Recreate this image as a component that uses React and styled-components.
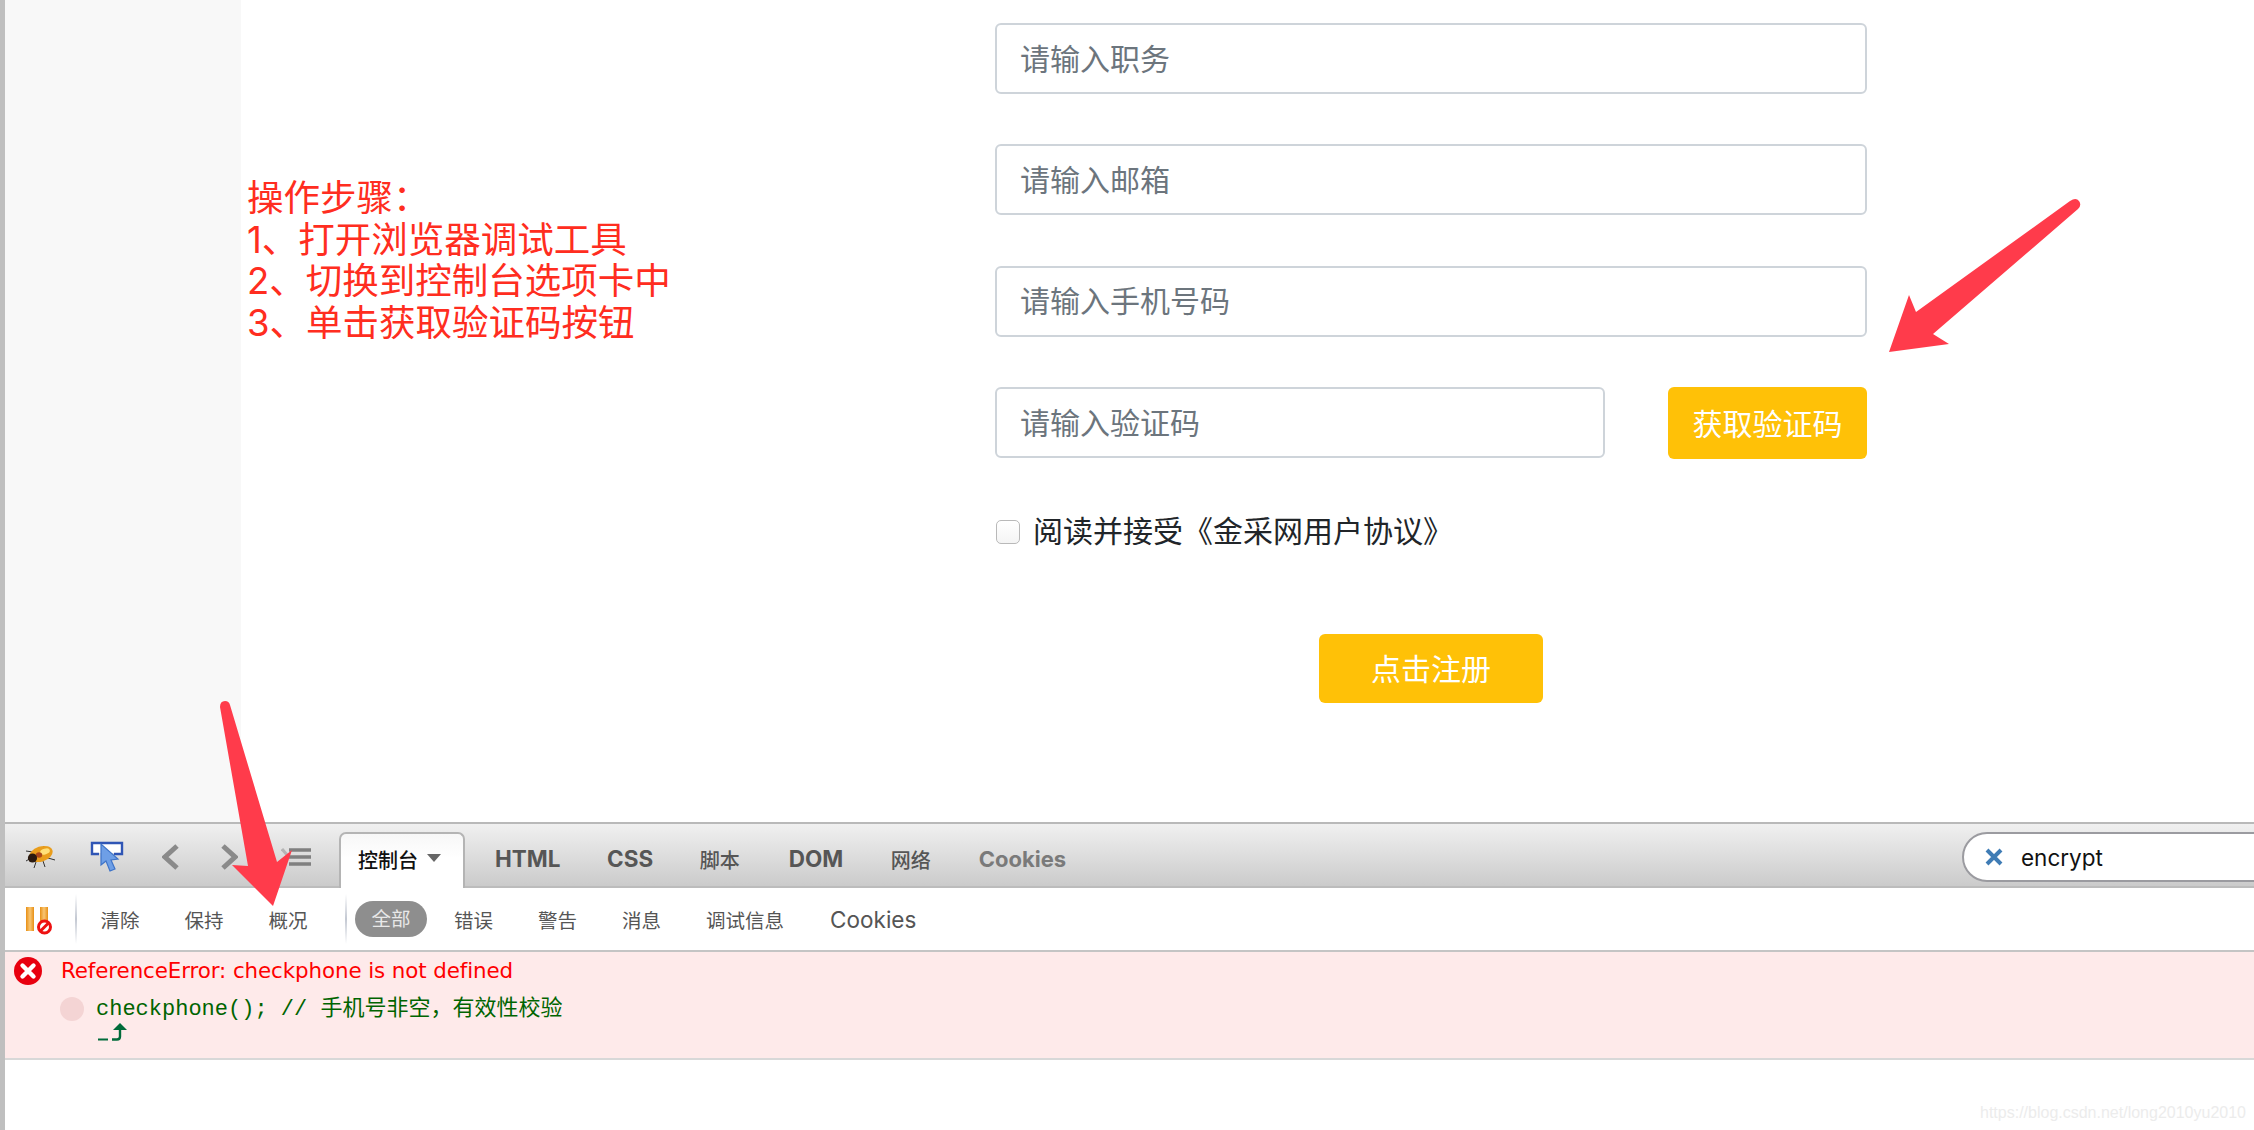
import React from 'react';
import styled, { createGlobalStyle } from 'styled-components';

const CJK = '"Noto Sans CJK SC", sans-serif';
const UI = 'Inter, "Noto Sans CJK SC", sans-serif';

const Global = createGlobalStyle`
  html, body { margin: 0; padding: 0; background: #fff; }
  * { box-sizing: border-box; }
`;

const Page = styled.div`
  position: relative;
  width: 2254px;
  height: 1130px;
  overflow: hidden;
  display: flex;
  background: #fff;
  font-family: ${UI};
`;
const Edge = styled.div`
  width: 5px;
  flex: none;
  background: #bfbfbf;
`;
const Content = styled.div`
  flex: 1;
  min-width: 0;
  display: flex;
  flex-direction: column;
`;
const Top = styled.div`
  height: 822px;
  flex: none;
  display: flex;
`;
const Sidebar = styled.div`
  width: 236px;
  flex: none;
  background: #f8f8f8;
`;
const Form = styled.form`
  width: 872px;
  margin-left: 754px;
  padding-top: 23px;
  display: flex;
  flex-direction: column;
`;
const Row = styled.div`
  display: flex;
  justify-content: space-between;
  margin-bottom: 50.4px;
`;
const Field = styled.input`
  width: ${p => p.$w || '100%'};
  height: 71px;
  border: 2px solid #ced4da;
  border-radius: 6px;
  padding: 0 23px 4px;
  font: 30px ${CJK};
  color: #495057;
  background: #fff;
  outline: none;
  &::placeholder { color: #6c757d; opacity: 1; }
`;
const CodeButton = styled.button`
  width: 199px;
  height: 72px;
  border: 0;
  border-radius: 6px;
  background: #ffc107;
  color: #fff;
  font: 30px ${CJK};
  padding: 0 0 3px;
`;
const Agree = styled.label`
  display: flex;
  align-items: center;
  height: 44px;
  margin-top: 1px;
  padding-left: 1px;
  font: 30px ${CJK};
  color: #212529;
`;
const Box = styled.span`
  width: 24px;
  height: 24px;
  margin-right: 13px;
  margin-top: -2px;
  border: 1.5px solid #b9b9b9;
  border-radius: 5px;
  background: linear-gradient(#fff, #f4f4f4);
`;
const AgreeText = styled.span`
  margin-bottom: 7px;
`;
const Register = styled.button`
  align-self: center;
  width: 224px;
  height: 69px;
  margin-top: 79px;
  border: 0;
  border-radius: 6px;
  background: #ffc107;
  color: #fff;
  font: 30px ${CJK};
  padding: 0 0 3px;
`;

const Toolbar = styled.div`
  height: 66px;
  flex: none;
  position: relative;
  display: flex;
  align-items: flex-end;
  border-top: 2px solid #b9b9b9;
  border-bottom: 2px solid #bcbcbc;
  background: linear-gradient(#f0f0f0, #cbcbcb);
`;
const IconSlot = styled.span`
  display: flex;
  flex: none;
  align-self: center;
  margin-top: 4px;
  margin-left: ${p => p.$ml}px;
`;
const ActiveTab = styled.div`
  width: 126px;
  height: 56px;
  margin-left: ${p => p.$ml}px;
  margin-bottom: -2px;
  padding: 0 0 4px 17px;
  display: flex;
  align-items: center;
  gap: 9px;
  border: 2px solid #b4b4b4;
  border-bottom: 0;
  border-radius: 7px 7px 0 0;
  background: linear-gradient(#f7f7f7, #fff 45%);
  font: 500 20px ${CJK};
  color: #111;
`;
const Caret = styled.span`
  width: 0;
  height: 0;
  margin-bottom: 3px;
  border-left: 7px solid transparent;
  border-right: 7px solid transparent;
  border-top: 8px solid #666;
`;
const Tab = styled.div`
  height: 54px;
  line-height: 54px;
  padding-top: ${p => p.$cjk ? 2 : 0}px;
  flex: none;
  margin-left: ${p => p.$ml}px;
  font-family: ${UI};
  font-size: ${p => p.$cjk ? 20 : p.$dim ? 22 : 22.5}px;
  font-weight: ${p => p.$cjk ? 500 : 700};
  color: ${p => p.$dim ? '#7a7a7a' : '#565656'};
`;
const Search = styled.div`
  position: absolute;
  left: 1957px;
  top: 8px;
  width: 320px;
  height: 50px;
  display: flex;
  align-items: center;
  padding-left: 21px;
  gap: 18px;
  border: 2px solid #9b9ba0;
  border-radius: 25px;
  background: #fff;
  font: 22.5px ${UI};
  color: #111;
`;

const Filter = styled.div`
  height: 62px;
  flex: none;
  display: flex;
  align-items: center;
`;
const Sep = styled.span`
  width: 2px;
  height: 50px;
  flex: none;
  margin-left: ${p => p.$ml}px;
  background: linear-gradient(#fff, #c3c8d2 50%, #fff);
`;
const FilterItem = styled.span`
  flex: none;
  margin-left: ${p => p.$ml}px;
  font: ${p => p.$latin ? 22.5 : 19.5}px ${UI};
  color: #555;
`;
const Pill = styled.span`
  width: 72px;
  height: 36px;
  flex: none;
  margin-left: ${p => p.$ml}px;
  border-radius: 18px;
  background: #8e8e8e;
  color: #e8e8e8;
  font: 19.5px/36px ${UI};
  text-align: center;
`;

const ErrorBlock = styled.div`
  height: 110px;
  flex: none;
  display: flex;
  padding: 5px 0 0 9px;
  border-top: 2px solid #c4c4c4;
  border-bottom: 2px solid #d8d8d8;
  background: #feeaea;
`;
const ErrorBody = styled.div`
  margin-left: 19px;
  display: flex;
  flex-direction: column;
`;
const ErrorTitle = styled.div`
  font: 21.4px/28px "DejaVu Sans", ${CJK};
  letter-spacing: -0.1px;
  color: #f00;
  height: 28px;
`;
const CodeLine = styled.div`
  display: flex;
  align-items: center;
  margin-top: 11px;
  gap: 12px;
  margin-left: -1px;
`;
const Breakpoint = styled.span`
  width: 24px;
  height: 24px;
  margin-top: -2px;
  border-radius: 50%;
  background: #f4d4d4;
`;
const Code = styled.code`
  font: 22px/28px "Liberation Mono", ${CJK};
  color: #006400;
  white-space: pre;
`;
const Pointer = styled.span`
  display: flex;
  margin: -2px 0 0 36px;
`;

const Annotation = styled.div`
  position: absolute;
  left: 247px;
  top: 178px;
  font: 36.5px/41.7px Inter, ${CJK};
  color: #ff2d20;
  white-space: pre;
`;
const Watermark = styled.div`
  position: absolute;
  left: 1980px;
  top: 1100px;
  font: 16px/26px "Liberation Sans", sans-serif;
  color: #ececec;
  white-space: nowrap;
`;
const Arrows = styled.svg`
  position: absolute;
  left: 0;
  top: 0;
  pointer-events: none;
`;

const Bug = () => (
  <svg width="32" height="24" viewBox="0 0 32 24">
    <g stroke="#333" strokeWidth="1" fill="none">
      <path d="M9 7 2 6M12 17l-2 6M19 16l2 6M24 13l7 2M7 13l-5 3M18 4l2-3" />
    </g>
    <ellipse cx="17" cy="9" rx="12" ry="7.5" transform="rotate(-18 17 9)" fill="#e99d1c" />
    <ellipse cx="21" cy="6.500" rx="5" ry="2.800" transform="rotate(-18 21 6.500)" fill="#ffe07a" />
    <ellipse cx="15" cy="10" rx="3.200" ry="2.800" fill="#a9461a" />
    <circle cx="8.500" cy="13" r="4.600" fill="#2b1a10" />
  </svg>
);
const Inspect = () => (
  <svg width="34" height="32" viewBox="0 0 34 32">
    <path d="M1 12V2h31v10h-9" fill="#fff" />
    <path d="M9 13H2V2h30v11h-8" fill="none" stroke="#2f55b5" strokeWidth="2.4" />
    <path d="M11 3v21l5-4 4 10 5-2-4-9 7-1z" fill="#6e9fe6" stroke="#3f74c8" strokeWidth="1.200" />
  </svg>
);
const Chevron = ({ flip }) => (
  <svg width="18" height="26" viewBox="0 0 18 26">
    <path d={flip ? 'M3 2l12 11L3 24' : 'M15 2 3 13l12 11'} fill="none" stroke="#8a8a8a" strokeWidth="5" />
  </svg>
);
const ListIcon = () => (
  <svg width="30" height="20" viewBox="0 0 30 20">
    <path d="M1 2l6 7" stroke="#b5b5b5" strokeWidth="3" />
    <path d="M8 3h22M8 10h22M8 17h22" stroke="#808080" strokeWidth="3.4" />
  </svg>
);
const PauseStop = () => (
  <svg width="28" height="28" viewBox="0 0 28 28">
    <defs>
      <linearGradient id="bar" x1="0" x2="1" y1="0" y2="0">
        <stop offset="0" stopColor="#e88f14" />
        <stop offset=".5" stopColor="#f8c674" />
        <stop offset="1" stopColor="#e88f14" />
      </linearGradient>
    </defs>
    <rect x="0" y="0" width="8" height="24" fill="url(#bar)" />
    <rect x="14" y="0" width="8" height="24" fill="url(#bar)" />
    <circle cx="18.500" cy="20" r="6" fill="#fff" stroke="#ee1111" strokeWidth="3" />
    <path d="M14.500 24 22.500 16" stroke="#ee1111" strokeWidth="3" />
  </svg>
);
const ClearX = () => (
  <svg width="18" height="18" viewBox="0 0 18 18">
    <path d="M2 2l14 14M16 2 2 16" stroke="#3f7cb5" strokeWidth="4" />
  </svg>
);
const ErrorIcon = () => (
  <svg width="28" height="28" viewBox="0 0 28 28">
    <circle cx="14" cy="14" r="14" fill="#e8000f" />
    <path d="M8.500 8.500l11 11M19.500 8.500l-11 11" stroke="#fff" strokeWidth="4.400" strokeLinecap="round" />
  </svg>
);
const ReturnMark = () => (
  <svg width="30" height="19" viewBox="0 0 30 19">
    <path d="M1 17.500h10" stroke="#006b3a" strokeWidth="2" />
    <path d="M15 17.500h5q3 0 3-3V7" fill="none" stroke="#006b3a" strokeWidth="2.400" />
    <path d="M16 8l7-7 7 7z" fill="#006b3a" />
  </svg>
);

export default function App() {
  return (
    <>
      <Global />
      <Page>
        <Edge />
        <Content>
          <Top>
            <Sidebar />
            <Form>
              <Row><Field placeholder="请输入职务" /></Row>
              <Row><Field placeholder="请输入邮箱" /></Row>
              <Row><Field placeholder="请输入手机号码" /></Row>
              <Row>
                <Field $w="610px" placeholder="请输入验证码" />
                <CodeButton type="button">获取验证码</CodeButton>
              </Row>
              <Agree><Box /><AgreeText>阅读并接受《金采网用户协议》</AgreeText></Agree>
              <Register type="button">点击注册</Register>
            </Form>
          </Top>
          <Toolbar>
            <IconSlot $ml={19}><Bug /></IconSlot>
            <IconSlot $ml={34}><Inspect /></IconSlot>
            <IconSlot $ml={38}><Chevron /></IconSlot>
            <IconSlot $ml={40}><Chevron flip /></IconSlot>
            <IconSlot $ml={43}><ListIcon /></IconSlot>
            <ActiveTab $ml={28}>控制台<Caret /></ActiveTab>
            <Tab $ml={30}>HTML</Tab>
            <Tab $ml={46.5}>CSS</Tab>
            <Tab $ml={46.5} $cjk>脚本</Tab>
            <Tab $ml={49}>DOM</Tab>
            <Tab $ml={47.5} $cjk>网络</Tab>
            <Tab $ml={48} $dim>Cookies</Tab>
            <Search><ClearX />encrypt</Search>
          </Toolbar>
          <Filter>
            <IconSlot $ml={21}><PauseStop /></IconSlot>
            <Sep $ml={20.5} />
            <FilterItem $ml={24}>清除</FilterItem>
            <FilterItem $ml={45}>保持</FilterItem>
            <FilterItem $ml={45}>概况</FilterItem>
            <Sep $ml={37} />
            <Pill $ml={8.5}>全部</Pill>
            <FilterItem $ml={27}>错误</FilterItem>
            <FilterItem $ml={45}>警告</FilterItem>
            <FilterItem $ml={45}>消息</FilterItem>
            <FilterItem $ml={45}>调试信息</FilterItem>
            <FilterItem $ml={46} $latin>Cookies</FilterItem>
          </Filter>
          <ErrorBlock>
            <ErrorIcon />
            <ErrorBody>
              <ErrorTitle>ReferenceError: checkphone is not defined</ErrorTitle>
              <CodeLine>
                <Breakpoint />
                <Code>checkphone(); // 手机号非空，有效性校验</Code>
              </CodeLine>
              <Pointer><ReturnMark /></Pointer>
            </ErrorBody>
          </ErrorBlock>
        </Content>
        <Annotation>{'操作步骤：\n1、打开浏览器调试工具\n2、切换到控制台选项卡中\n3、单击获取验证码按钮'}</Annotation>
        <Watermark>https://blog.csdn.net/long2010yu2010</Watermark>
        <Arrows width="2254" height="1130" viewBox="0 0 2254 1130">
          <path fill="#ff3b4b" d="M2070 201Q2076 197 2079 201Q2082 205 2078 209L1933 334L1949 344L1889 352L1909 295L1916 312Z" />
          <path fill="#ff3b4b" d="M220 707Q220 701 225 701Q229 701 230 705L277 862L292 850L273 906L232 865L248 866Z" />
        </Arrows>
      </Page>
    </>
  );
}
